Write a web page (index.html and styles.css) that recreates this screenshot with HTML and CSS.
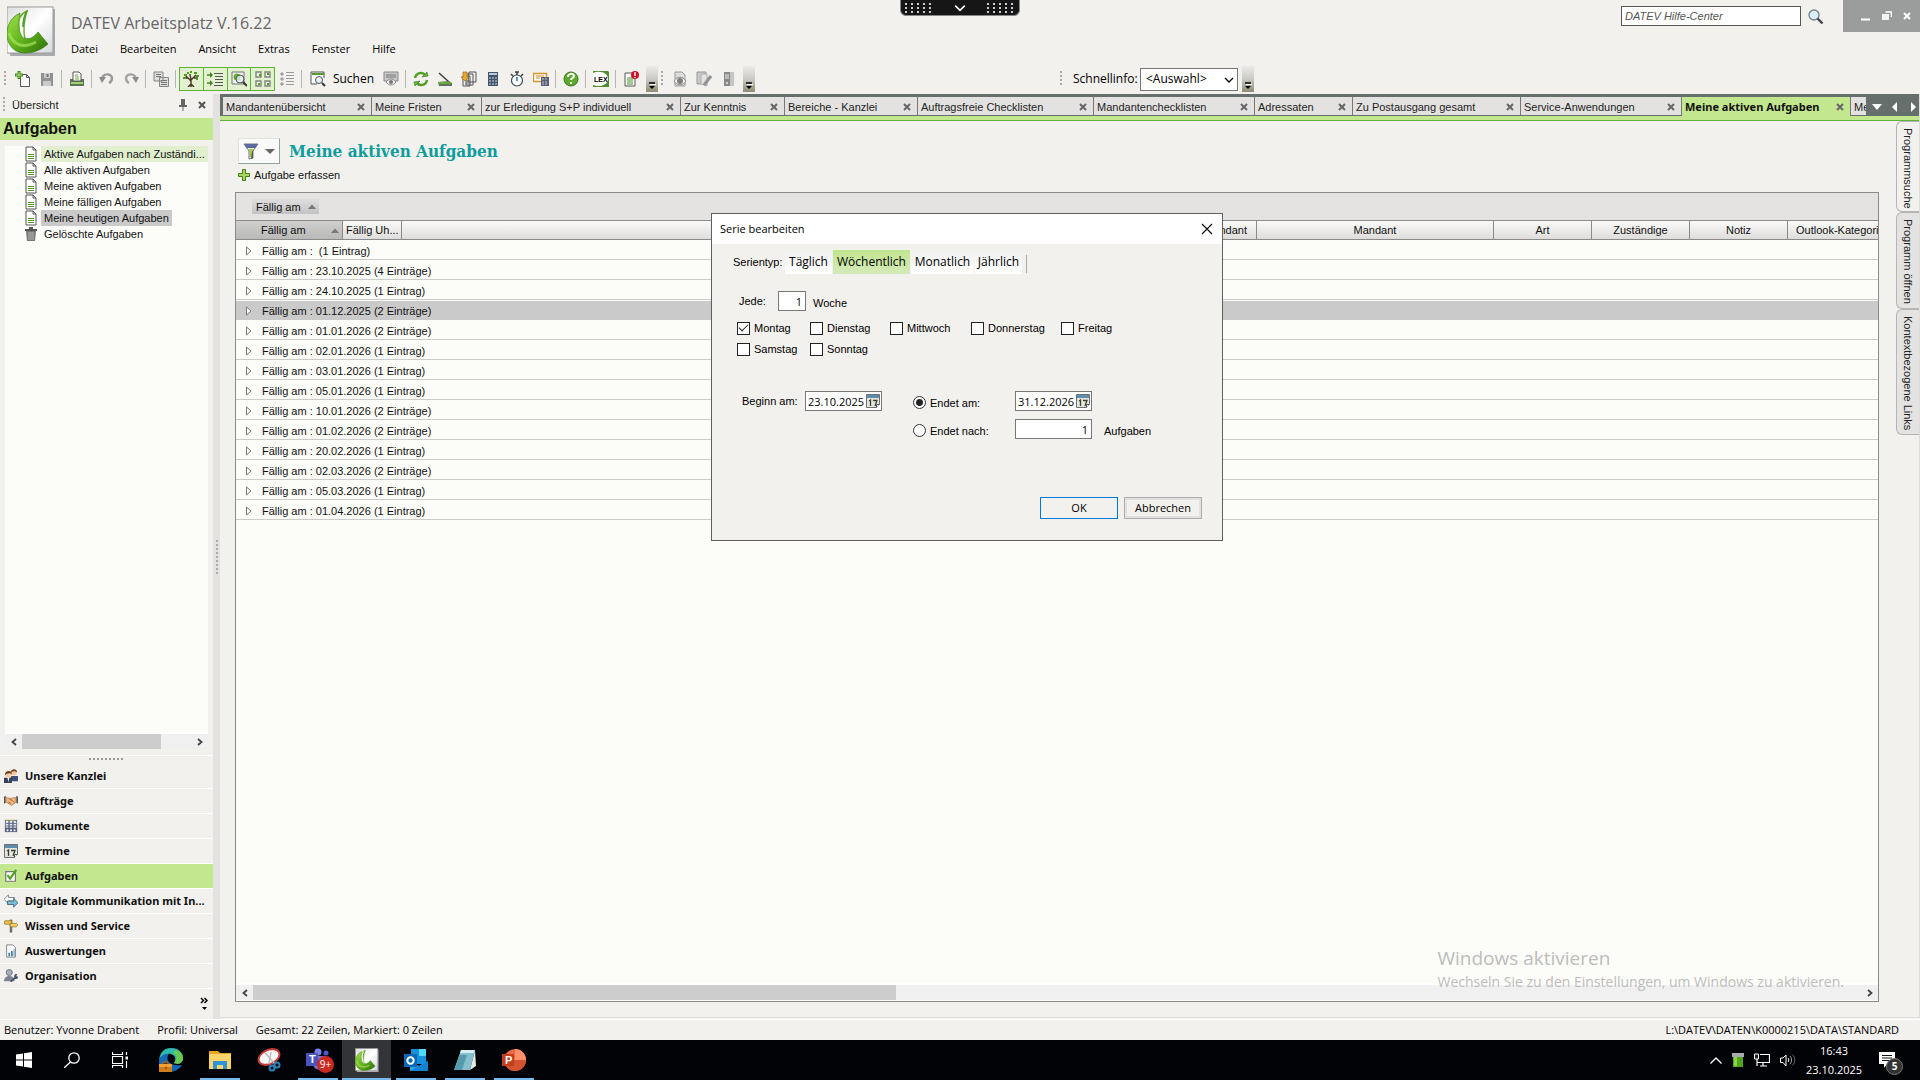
FILE: index.html
```html
<!DOCTYPE html>
<html lang="de">
<head>
<meta charset="utf-8">
<title>DATEV Arbeitsplatz</title>
<link rel="stylesheet" href="styles.css">
</head>
<body>
<svg class="defs" aria-hidden="true">
  <defs>
    <linearGradient id="leaf" x1="0" y1="0" x2="1" y2="1"><stop offset="0" stop-color="#a5e04c"/><stop offset=".5" stop-color="#62b51c"/><stop offset="1" stop-color="#2c6c0c"/></linearGradient>
    <linearGradient id="paper" x1="0" y1="0" x2="1" y2="1"><stop offset="0" stop-color="#dcdedf"/><stop offset=".5" stop-color="#fff"/><stop offset="1" stop-color="#d5d7d9"/></linearGradient>
    <symbol id="logo" viewBox="0 0 48 50">
      <rect x="3" y="3" width="45" height="47" fill="#a9abac"/><rect x="0" y="1" width="46" height="46" fill="url(#paper)" stroke="#999" stroke-width="1"/>
      <path d="M13 7C3 12 0 20 0 28c0 12 8 19 18 19 9 0 16-3 23-9l-10-12c-4 5-8 8-13 6-5-3-6-14-5-25z" fill="url(#leaf)" stroke="#397f13" stroke-width=".7"/>
      <path d="M20 5c-7 3-9 9-8 16 0 6 2 10 6 13-2-10-1-20 2-29z" fill="#f8faf5" stroke="#61a832" stroke-width="1.4"/>
      <path d="M20 5c-3 5-4 10-4 16" fill="none" stroke="#4f9a22" stroke-width="1.6"/>
      <path d="M2 27c4 12 14 16 27 9" fill="none" stroke="#a8e15c" stroke-width="3" opacity=".7"/>
    </symbol>
    <symbol id="doc" viewBox="0 0 12 16"><path d="M1 1h7l3 3v11H1z" fill="#fff" stroke="#555" stroke-width="1"/><path d="M8 1v3h3" fill="none" stroke="#555"/><path d="M3 8.500h6M3 10.500h6M3 12.500h6" stroke="#4c9a1e"/></symbol>
    <symbol id="x" viewBox="0 0 8 8"><path d="M1 1l6 6M7 1L1 7" stroke="currentColor" stroke-width="2"/></symbol>
    <symbol id="cal" viewBox="0 0 14 14"><path d="M.5.5h13v10l-3 3H.5z" fill="#e4e5dc" stroke="#6a7075"/><path d="M1 1h12v3H1z" fill="#5e8cad"/><path d="M3 7l1.500-1v6M7 6.500h4L9 12" fill="none" stroke="#39402f" stroke-width="1.300"/><path d="M10.500 13.500v-3h3" fill="#fff" stroke="#555"/></symbol>
    <symbol id="overflow" viewBox="0 0 12 26"><rect width="12" height="26" fill="url(#ovf)"/><path d="M3 17h6" stroke="#000" stroke-width="1.500"/><path d="M4 18.500h6" stroke="#fff"/><path d="M3 20h6l-3 3z" fill="#000"/></symbol>
    <linearGradient id="ovf" x1="0" y1="0" x2="0" y2="1"><stop offset="0" stop-color="#ecebe9"/><stop offset=".5" stop-color="#cbcac6"/><stop offset="1" stop-color="#8f8c72"/></linearGradient>
    <symbol id="left" viewBox="0 0 8 8"><path d="M6 1L2.500 4 6 7" fill="none" stroke="#444" stroke-width="1.800"/></symbol>
    <symbol id="right" viewBox="0 0 8 8"><path d="M2 1l3.500 3L2 7" fill="none" stroke="#444" stroke-width="1.800"/></symbol>
    <symbol id="down" viewBox="0 0 10 6"><path d="M1 1l4 4 4-4" fill="none" stroke="currentColor" stroke-width="1.300"/></symbol>
    <symbol id="up" viewBox="0 0 8 5"><path d="M0 5l4-4.500L8 5z" fill="#777"/></symbol>
    <symbol id="expand" viewBox="0 0 6 10"><path d="M.5 1v8l4.500-4z" fill="#fff" stroke="#777"/></symbol>
  </defs>
</svg>

<header class="head">
  <svg class="logo"><use href="#logo"/></svg>
  <div class="head-text">
    <h1>DATEV Arbeitsplatz V.16.22</h1>
    <nav class="menu">
      <button>Datei</button><button>Bearbeiten</button><button>Ansicht</button><button>Extras</button><button>Fenster</button><button>Hilfe</button>
    </nav>
  </div>
  <div class="help-search">
    <input type="text" placeholder="DATEV Hilfe-Center" aria-label="DATEV Hilfe-Center">
    <button aria-label="Suche starten"><svg width="16" height="16" viewBox="0 0 16 16"><circle cx="6" cy="6" r="5" fill="#d9eefa" stroke="#77858c" stroke-width="1.400"/><path d="M9.500 9.500l5 5" stroke="#444" stroke-width="2.400"/></svg></button>
  </div>
  <div class="window-buttons">
    <button aria-label="Minimieren"><svg width="10" height="10" viewBox="0 0 10 10"><path d="M0 8.500h9" stroke="#fff" stroke-width="2"/></svg></button>
    <button aria-label="Wiederherstellen"><svg width="10" height="10" viewBox="0 0 10 10"><path d="M3.500 1h6v5" fill="none" stroke="#fff" stroke-width="1.600"/><path d="M0 3h7v6H0z" fill="#f2f2f2"/></svg></button>
    <button aria-label="Schließen"><svg width="8" height="8" color="#fff"><use href="#x"/></svg></button>
  </div>
</header>

<div class="toolbar">
  <i class="grip"></i>
  <button class="tool" aria-label="Neu"><svg viewBox="0 0 16 16"><path d="M5.500 3.500h6l3 3v9h-9z" fill="#fff" stroke="#555"/><path d="M11.500 3.500v3h3" fill="none" stroke="#555"/><path d="M4 0v8M0 4h8" stroke="#3d8c12" stroke-width="3"/><path d="M4 1v6M1 4h6" stroke="#b5e27a"/></svg></button>
  <button class="tool" aria-label="Speichern"><svg viewBox="0 0 16 16"><path d="M2 2h12v13H2z" fill="#8f9192"/><path d="M5 2h6v5H5zM4 10h8v5H4z" fill="#c9cacb"/><path d="M8.500 3v3" stroke="#777" stroke-width="2"/></svg></button>
  <i class="sep"></i>
  <button class="tool" aria-label="Drucken"><svg viewBox="0 0 16 16"><path d="M1 8h14v7H1z" fill="#5c7357"/><path d="M4 1h6l2 2v7H4z" fill="#fff" stroke="#555"/><path d="M6 4h3M6 6h4M6 8h4" stroke="#65a832"/><path d="M2 12h12" stroke="#9fd36a" stroke-width="2"/></svg></button>
  <i class="sep"></i>
  <button class="tool" aria-label="Rückgängig"><svg viewBox="0 0 16 16"><path d="M3 8c1-6 9-6 10-1 0 3-1 4-3 5" fill="none" stroke="#999" stroke-width="2.400"/><path d="M0 6h7l-4 6z" fill="#8c8c8c"/></svg></button>
  <button class="tool" aria-label="Wiederholen"><svg viewBox="0 0 16 16"><path d="M13 8C12 2 4 2 3 7c0 3 1 4 3 5" fill="none" stroke="#a4a4a4" stroke-width="2.400"/><path d="M16 6H9l4 6z" fill="#8c8c8c"/></svg></button>
  <i class="sep"></i>
  <button class="tool" aria-label="Kopieren"><svg viewBox="0 0 16 16"><path d="M1 1h9v9H1zM6.500 6.500h9v9h-9z" fill="#dededc" stroke="#858585"/><path d="M3 3.500h5M3 5.500h5M8 9.500h6M8 11.500h6M8 13.500h6" stroke="#777"/></svg></button>
  <i class="sep"></i>
  <div class="toggles">
    <button aria-label="Navigationsbaum"><svg viewBox="0 0 16 16"><path d="M8 16V8M8 10L3 5M8 9l5-5M8 9L7 3M5 7H1M11 7h4M5 16l3-3 3 3" fill="none" stroke="#4d3c2c" stroke-width="1.500"/><path d="M1 4h3M4 2h2M7 1h2M11 2h3M13 5h3M0 7h2M13 8h2" stroke="#4f9c21" stroke-width="2"/></svg></button>
    <button aria-label="Gliederung"><svg viewBox="0 0 16 16"><path d="M0 4h5M0 12h5" stroke="#3d8d1a" stroke-width="1.600"/><path d="M3 1l3 3-3 3zM3 9l3 3-3 3z" fill="#477f30"/><path d="M7 2.500h9M8 5.500h8M8 8.500h8M8 11.500h8M7 14.500h9" stroke="#555" stroke-width="1.200"/></svg></button>
    <button aria-label="Vorschau"><svg viewBox="0 0 16 16"><path d="M1 1h12v12H1z" fill="#f6f6f6" stroke="#6c7170"/><circle cx="6" cy="6" r="3.500" fill="#63ae2d"/><circle cx="9" cy="8" r="4" fill="#dceaf0" fill-opacity=".8" stroke="#555"/><path d="M12 11l4 4" stroke="#333" stroke-width="2"/></svg></button>
    <button aria-label="Kacheln"><svg viewBox="0 0 16 16"><path d="M1 1h5v5H1zM10 1h5v5h-5zM1 10h5v5H1zM10 10h5v5h-5z" fill="#f0f3e9" stroke="#80877c" stroke-width="1.400"/><path d="M4 3h2v2H4zM12 2h2v2h-2zM3 12h2v2H3zM12 12h2v2h-2z" fill="#4f9d22"/></svg></button>
  </div>
  <button class="tool" aria-label="Liste"><svg viewBox="0 0 16 16"><path d="M2 2h2v2H2zM2 7h2v2H2zM2 12h2v2H2z" fill="#eee" stroke="#8a8a8a"/><path d="M7 1.500h8M7 4.500h8M7 7.500h8M7 10.500h8M7 13.500h8" stroke="#999"/></svg></button>
  <i class="sep"></i>
  <button class="tool search-tool"><svg viewBox="0 0 16 16"><path d="M1 13V1h13v6" fill="#fff" stroke="#555"/><path d="M1 13h6" stroke="#555"/><path d="M2 3h12" stroke="#509b2b" stroke-width="2"/><circle cx="9" cy="9" r="3.500" fill="#e5f1f6" stroke="#555"/><path d="M12 12l3 3" stroke="#333" stroke-width="2"/></svg><span>Suchen</span></button>
  <button class="tool" aria-label="Anzeigen"><svg viewBox="0 0 16 16"><path d="M1 1h14v9H1z" fill="#c8c8c8" stroke="#898989"/><path d="M3 4h10M3 6h10" stroke="#777"/><path d="M3 11c3-4 7-4 10 0-3 4-7 4-10 0z" fill="#eee" stroke="#888"/><circle cx="8" cy="11" r="2" fill="#777"/></svg></button>
  <i class="sep"></i>
  <button class="tool" aria-label="Aktualisieren"><svg viewBox="0 0 16 16"><path d="M2 7c1-6 8-6 10-3M14 9c-1 6-8 6-10 3" fill="none" stroke="#4e9f23" stroke-width="2.400"/><path d="M9 6l6-1-1-4zM7 10l-6 1 1 4z" fill="#65b52f" stroke="#34751a" stroke-width=".6"/></svg></button>
  <button class="tool" aria-label="Scannen"><svg viewBox="0 0 16 16"><path d="M2 2l10 9" stroke="#444" stroke-width="1.600"/><path d="M1 11l11-1 3 2v3H2z" fill="#60715f"/><path d="M2 12h12" stroke="#68ad36" stroke-width="2"/></svg></button>
  <button class="tool" aria-label="Ablegen"><svg viewBox="0 0 16 16"><path d="M8 1h7v10H7zM5 3h7v11H5zM2 5h7v10H2z" fill="#eee" stroke="#555"/><path d="M5 10h4M5 12h4" stroke="#666"/><path d="M2 1h4v5h2L4 10 0 6h2z" fill="#e9a72c" stroke="#9b6e1f" stroke-width=".7"/></svg></button>
  <button class="tool" aria-label="Rechner"><svg viewBox="0 0 16 16"><path d="M3 1h10v14H3z" fill="#46546b"/><path d="M4 3h8" stroke="#b8cae0" stroke-width="2"/><path d="M4 7h8M4 10h8M4 13h8" stroke="#9fadbd" stroke-width="1.500" stroke-dasharray="2 1"/></svg></button>
  <button class="tool" aria-label="Zeiterfassung"><svg viewBox="0 0 16 16"><path d="M6 1h4M8 1v3M2 3l2 2M14 3l-2 2" stroke="#444" stroke-width="1.600"/><circle cx="8" cy="9.500" r="5.500" fill="#fff" stroke="#3b4a55" stroke-width="1.200"/><path d="M8 6v4" stroke="#3979ba" stroke-width="1.600"/></svg></button>
  <button class="tool" aria-label="Abrechnung"><svg viewBox="0 0 16 16"><path d="M.5 2.500h13v8H.5z" fill="#fff" stroke="#d9952a" stroke-width="1.500"/><path d="M3 5h8M3 7h4" stroke="#ca8927"/><path d="M8 6h8v9H8z" fill="#596173"/><path d="M9 8h6M9 11h6M9 13h6" stroke="#bcc5d3" stroke-dasharray="2 1"/></svg></button>
  <i class="sep"></i>
  <button class="tool" aria-label="Hilfe"><svg viewBox="0 0 16 16"><circle cx="8" cy="8" r="7" fill="#5da92d" stroke="#39751c"/><path d="M5 6c0-4 6-4 6-1 0 2-3 2-3 4" fill="none" stroke="#fff" stroke-width="2"/><path d="M7 11h2v2H7z" fill="#fff"/></svg></button>
  <i class="sep"></i>
  <button class="tool" aria-label="LEX"><svg viewBox="0 0 16 16"><path d="M0 0h15l1 1v15H0z" fill="#538d30"/><path d="M0 2c7-3 15 0 15 6 0 5-7 9-15 6z" fill="#fff"/><text x="1" y="11" font-family="Liberation Sans" font-size="7" font-weight="700">LEX</text></svg></button>
  <i class="sep"></i>
  <button class="tool" aria-label="Hinweise"><svg viewBox="0 0 16 16"><path d="M2 2h10v13H2z" fill="#fff" stroke="#555"/><path d="M4 7h6M4 9h6M4 11h6M4 13h6" stroke="#478f24"/><circle cx="12" cy="4" r="4" fill="#cf1020"/><path d="M12 1v4M12 6v1" stroke="#fff" stroke-width="1.400"/></svg></button>
  <button class="overflow" aria-label="Weitere Schaltflächen"><svg><use href="#overflow"/></svg></button>
  <i class="grip"></i>
  <button class="tool" aria-label="Ansehen"><svg viewBox="0 0 16 16"><path d="M3 1h7l3 3v11H3z" fill="#ddd" stroke="#999"/><path d="M2 10c3-5 9-5 12 0-3 5-9 5-12 0z" fill="#eee" stroke="#888"/><circle cx="8" cy="10" r="3" fill="#808080"/></svg></button>
  <button class="tool" aria-label="Bearbeiten"><svg viewBox="0 0 16 16"><path d="M1 1h9v12H1z" fill="#c9c9c9" stroke="#999"/><path d="M5 3h6v12l-6-2z" fill="#e4e4e4" stroke="#aaa"/><path d="M15 5l-7 9" stroke="#939393" stroke-width="3"/></svg></button>
  <button class="tool" aria-label="Ordner"><svg viewBox="0 0 16 16"><path d="M4 1h6v14H4z" fill="#888"/><path d="M10 1h4v14h-4z" fill="#c5c5c5"/><path d="M5 3h4v5H5z" fill="#bbb"/><circle cx="7" cy="12" r="1" fill="#eee"/></svg></button>
  <button class="overflow" aria-label="Weitere Schaltflächen"><svg><use href="#overflow"/></svg></button>
  <div class="quickinfo">
    <i class="grip"></i>
    <label for="quick">Schnellinfo:</label>
    <div class="select"><select id="quick"><option>&lt;Auswahl&gt;</option></select><svg width="10" height="6"><use href="#down"/></svg></div>
    <button class="overflow" aria-label="Weitere Schaltflächen"><svg><use href="#overflow"/></svg></button>
  </div>
</div>

<div class="workspace">
  <aside class="sidebar">
    <div class="side-title"><i class="grip"></i><span>Übersicht</span>
      <button aria-label="Anheften"><svg width="8" height="12" viewBox="0 0 8 12"><path d="M2 0h4v6h2v2H0V6h2zM3.500 8h1v4h-1z" fill="#666"/></svg></button>
      <button aria-label="Schließen"><svg width="8" height="8"><use href="#x"/></svg></button></div>
    <h2>Aufgaben</h2>
    <ul class="tree">
      <li><svg><use href="#doc"/></svg><a href="#" class="hot">Aktive Aufgaben nach Zuständi...</a></li>
      <li><svg><use href="#doc"/></svg><a href="#">Alle aktiven Aufgaben</a></li>
      <li><svg><use href="#doc"/></svg><a href="#">Meine aktiven Aufgaben</a></li>
      <li><svg><use href="#doc"/></svg><a href="#">Meine fälligen Aufgaben</a></li>
      <li><svg><use href="#doc"/></svg><a href="#" class="current">Meine heutigen Aufgaben</a></li>
      <li><svg viewBox="0 0 12 16"><path d="M1 5h10l-1 10H2z" fill="#777"/><path d="M4 6v8M6 6v8M8 6v8" stroke="#bbb"/><path d="M0 4h12M4 2h4" stroke="#555" stroke-width="2"/></svg><a href="#">Gelöschte Aufgaben</a></li>
    </ul>
    <div class="scroll side-scroll"><button aria-label="Nach links"><svg><use href="#left"/></svg></button><div class="track"><div class="thumb"></div></div><button aria-label="Nach rechts"><svg><use href="#right"/></svg></button></div>
    <div class="side-grip"><i></i></div>
    <nav class="modules">
      <a href="#"><svg viewBox="0 0 16 16"><path d="M7 14V8h9v6z" fill="#3e5078"/><circle cx="11" cy="4" r="3.500" fill="#f1c7a1"/><path d="M8 4c0-5 7-5 7 0-2-2-4-2-7 0z" fill="#70401c"/><path d="M0 16v-6h9v6z" fill="#343f5d"/><path d="M4 10h2l-1 5z" fill="#fff"/><circle cx="5" cy="7" r="3.500" fill="#f4cda9"/><path d="M1 7c0-6 8-6 8-1-3-2-5-1-8 1z" fill="#6a3b1e"/></svg>Unsere Kanzlei</a>
      <a href="#"><svg viewBox="0 0 16 16"><path d="M0 3l2-1v8l-2 1zM16 3l-2-1v8l2 1z" fill="#555"/><path d="M2 4l5 1 6-1 1 5-5 4-2-1-5-3z" fill="#efb985" stroke="#a66b40" stroke-width=".8"/><path d="M6 6l3 1 3 3M5 9l3 2" fill="none" stroke="#9e6138"/></svg>Aufträge</a>
      <a href="#"><svg viewBox="0 0 16 16"><path d="M1 1h14v14H1z" fill="#596280"/><path d="M2 2h3v8H2zM6.500 2h3v8h-3zM11 2h3v8h-3z" fill="#e3e9ef"/><path d="M2 5h12M2 8h12" stroke="#57627b"/><path d="M3 13h2M7 13h2M11 13h2" stroke="#fff" stroke-width="2"/><path d="M2 1.500h4" stroke="#9bbf45"/><path d="M7 1.500h4" stroke="#d9b638"/></svg>Dokumente</a>
      <a href="#"><svg viewBox="0 0 14 14"><use href="#cal" width="14" height="14"/></svg>Termine</a>
      <a href="#" class="active"><svg viewBox="0 0 16 16"><path d="M2 3h11v11H2z" fill="#fff" stroke="#777" stroke-width="1.400"/><path d="M4 7l3 4 7-10" fill="none" stroke="#4fa51e" stroke-width="2.500"/></svg>Aufgaben</a>
      <a href="#"><svg viewBox="0 0 16 16"><path d="M5 1v3h7v4H5v3L0 6z" fill="#fff" stroke="#707a81"/><path d="M11 15v-3H4V8h7V5l5 5z" fill="#79bcd4" stroke="#3b667c"/></svg>Digitale Kommunikation mit In...</a>
      <a href="#"><svg viewBox="0 0 16 16"><path d="M7 1h2v14H7z" fill="#777" stroke="#444" stroke-width=".6"/><path d="M1 2h8v4H1L0 4z" fill="#eec34c" stroke="#8d6b20" stroke-width=".8"/><path d="M7 5h7l2 2-2 2H7z" fill="#f3ce61" stroke="#8d6b20" stroke-width=".8"/></svg>Wissen und Service</a>
      <a href="#"><svg viewBox="0 0 16 16"><path d="M3 1h7l3 3v11H3z" fill="#fff" stroke="#777"/><path d="M5 10h2v4H5zM8 8h2v6H8zM11 6h1v8h-1z" fill="#3e82a7"/></svg>Auswertungen</a>
      <a href="#"><svg viewBox="0 0 16 16"><circle cx="6" cy="4" r="3.500" fill="#a5abb7" stroke="#697080"/><path d="M0 14c0-8 12-8 12 0z" fill="#7d8594"/><path d="M7 14l5-5c-1-3 2-4 3-3l-1 2 1 1 1-1c1 3-2 4-3 3l-5 4z" fill="#404c63"/></svg>Organisation</a>
    </nav>
    <button class="more" aria-label="Weitere Module"><svg width="8" height="14" viewBox="0 0 8 14"><path d="M1 1l2.500 2.500L1 6M4.500 1L7 3.500 4.500 6" fill="none" stroke="#000" stroke-width="1.500"/><path d="M2 10h5l-2.500 3z"/></svg></button>
  </aside>
  <div class="splitter"><i></i></div>
  <main class="main">
    <div class="tabs">
      <div class="tab t1"><a href="#">Mandantenübersicht</a><button aria-label="Schließen"><svg><use href="#x"/></svg></button></div>
      <div class="tab t2"><a href="#">Meine Fristen</a><button aria-label="Schließen"><svg><use href="#x"/></svg></button></div>
      <div class="tab t3"><a href="#">zur Erledigung S+P individuell</a><button aria-label="Schließen"><svg><use href="#x"/></svg></button></div>
      <div class="tab t4"><a href="#">Zur Kenntnis</a><button aria-label="Schließen"><svg><use href="#x"/></svg></button></div>
      <div class="tab t5"><a href="#">Bereiche - Kanzlei</a><button aria-label="Schließen"><svg><use href="#x"/></svg></button></div>
      <div class="tab t6"><a href="#">Auftragsfreie Checklisten</a><button aria-label="Schließen"><svg><use href="#x"/></svg></button></div>
      <div class="tab t7"><a href="#">Mandantenchecklisten</a><button aria-label="Schließen"><svg><use href="#x"/></svg></button></div>
      <div class="tab t8"><a href="#">Adressaten</a><button aria-label="Schließen"><svg><use href="#x"/></svg></button></div>
      <div class="tab t9"><a href="#">Zu Postausgang gesamt</a><button aria-label="Schließen"><svg><use href="#x"/></svg></button></div>
      <div class="tab t10"><a href="#">Service-Anwendungen</a><button aria-label="Schließen"><svg><use href="#x"/></svg></button></div>
      <div class="tab t11 active"><a href="#">Meine aktiven Aufgaben</a><button aria-label="Schließen"><svg><use href="#x"/></svg></button></div>
      <div class="tab cut"><a href="#">Me</a></div>
      <div class="tab-nav">
        <button aria-label="Tabliste"><svg width="10" height="10" viewBox="0 0 10 10"><path d="M0 2h10L5 8z" fill="#fff"/></svg></button>
        <button aria-label="Zurück"><svg width="10" height="10" viewBox="0 0 10 10"><path d="M7 0v10L2 5z" fill="#fff"/></svg></button>
        <button aria-label="Vor"><svg width="10" height="10" viewBox="0 0 10 10"><path d="M3 0v10l5-5z" fill="#fff"/></svg></button>
      </div>
    </div>
    <div class="content">
      <section class="page">
        <div class="page-title">
          <button class="filter" aria-label="Filter"><svg width="16" height="18" viewBox="0 0 16 18"><path d="M1 2h14l-5 7v7l-4 1V9z" fill="#e3e8dc" stroke="#777"/><path d="M1 2h14l-3 4H4z" fill="#5a69a0"/><path d="M6 7h4l-1 3v5H7v-5z" fill="#9ccc3c"/><path d="M10 8v8l-2 1 1-7z" fill="#4c5a4e"/></svg><svg width="10" height="6" viewBox="0 0 10 6"><path d="M0 1h10L5 6z" fill="#666"/></svg></button>
          <h2>Meine aktiven Aufgaben</h2>
        </div>
        <button class="add"><svg width="12" height="12" viewBox="0 0 12 12"><path d="M4.500.5h3v4h4v3h-4v4h-3v-4h-4v-3h4z" fill="#a9d860" stroke="#3f7f14"/></svg>Aufgabe erfassen</button>
        <div class="grid">
          <div class="group-bar"><button>Fällig am <svg width="8" height="5"><use href="#up"/></svg></button></div>
          <table>
            <colgroup><col class="c1"><col class="c2"><col><col class="c4"><col class="c5"><col class="c6"><col class="c6"><col class="c6"><col class="c9"></colgroup>
            <thead><tr><th class="sorted"><span>Fällig am</span><svg width="8" height="5"><use href="#up"/></svg></th><th class="tight">Fällig Uh...</th><th></th><th class="end">Mandant</th><th>Mandant</th><th>Art</th><th>Zuständige</th><th>Notiz</th><th class="cutoff">Outlook-Kategorie</th></tr></thead>
            <tbody>
              <tr><td colspan="9"><svg><use href="#expand"/></svg>Fällig am :&nbsp; (1 Eintrag)</td></tr>
              <tr><td colspan="9"><svg><use href="#expand"/></svg>Fällig am : 23.10.2025 (4 Einträge)</td></tr>
              <tr><td colspan="9"><svg><use href="#expand"/></svg>Fällig am : 24.10.2025 (1 Eintrag)</td></tr>
              <tr class="selected"><td colspan="9"><svg><use href="#expand"/></svg>Fällig am : 01.12.2025 (2 Einträge)</td></tr>
              <tr><td colspan="9"><svg><use href="#expand"/></svg>Fällig am : 01.01.2026 (2 Einträge)</td></tr>
              <tr><td colspan="9"><svg><use href="#expand"/></svg>Fällig am : 02.01.2026 (1 Eintrag)</td></tr>
              <tr><td colspan="9"><svg><use href="#expand"/></svg>Fällig am : 03.01.2026 (1 Eintrag)</td></tr>
              <tr><td colspan="9"><svg><use href="#expand"/></svg>Fällig am : 05.01.2026 (1 Eintrag)</td></tr>
              <tr><td colspan="9"><svg><use href="#expand"/></svg>Fällig am : 10.01.2026 (2 Einträge)</td></tr>
              <tr><td colspan="9"><svg><use href="#expand"/></svg>Fällig am : 01.02.2026 (2 Einträge)</td></tr>
              <tr><td colspan="9"><svg><use href="#expand"/></svg>Fällig am : 20.02.2026 (1 Eintrag)</td></tr>
              <tr><td colspan="9"><svg><use href="#expand"/></svg>Fällig am : 02.03.2026 (2 Einträge)</td></tr>
              <tr><td colspan="9"><svg><use href="#expand"/></svg>Fällig am : 05.03.2026 (1 Eintrag)</td></tr>
              <tr><td colspan="9"><svg><use href="#expand"/></svg>Fällig am : 01.04.2026 (1 Eintrag)</td></tr>
            </tbody>
          </table>
          <div class="scroll grid-scroll"><button aria-label="Nach links"><svg><use href="#left"/></svg></button><div class="track"><div class="thumb"></div></div><button aria-label="Nach rechts"><svg><use href="#right"/></svg></button></div>
        </div>
      </section>
      <nav class="side-tabs"><button class="open">Programmsuche</button><button>Programm öffnen</button><button>Kontextbezogene Links</button></nav>
    </div>
  </main>
</div>

<footer class="status"><span>Benutzer: Yvonne Drabent</span><span>Profil: Universal</span><span>Gesamt: 22 Zeilen, Markiert: 0 Zeilen</span><span class="path">L:\DATEV\DATEN\K0000215\DATA\STANDARD</span></footer>

<div class="taskbar">
  <div class="system">
    <button aria-label="Start"><svg width="16" height="16" viewBox="0 0 16 16"><path d="M0 2.500l7-1v6H0zM8 1.300L16 0v7.500H8zM0 8.500h7v6l-7-1zM8 8.500h8V16l-8-1.300z" fill="#fff"/></svg></button>
    <button aria-label="Suche"><svg width="16" height="16" viewBox="0 0 16 16"><circle cx="10" cy="6" r="5.200" fill="none" stroke="#fff" stroke-width="1.300"/><path d="M6.500 10L0 16" stroke="#fff" stroke-width="1.300"/></svg></button>
    <button aria-label="Taskansicht"><svg width="16" height="16" viewBox="0 0 16 16"><path d="M.5 0v2.500h10V0M.5 16v-2.500h10V16M.5 4.500h10v7H.5zM14.500 0v3M14.500 9v7" fill="none" stroke="#fff" stroke-width="1.200"/><path d="M13.500 4.500h2.500v3h-2.500z" fill="#fff"/></svg></button>
  </div>
  <div class="apps">
    <button aria-label="Edge"><svg viewBox="0 0 24 24"><path d="M12 0c8 0 12 5 12 10 0 5-5 7-9 5 4-6-2-10-6-9-5 1-9 5-9 8C0 6 4 0 12 0z" fill="#2fb8b0"/><path d="M17 2c5 2 7 5 7 8 0 5-5 7-9 5 5-5 2-8-1-10z" fill="#68c94d"/><path d="M0 14C0 9 5 5 10 6c-3 3-3 13 13 11-7 11-23 8-23-3z" fill="#1468b5"/><path d="M0 16h13v8H0z" fill="#cf7e1b"/><path d="M0 16h13v3H0z" fill="#f0a334"/><path d="M4 16v-2h5v2M6 19h2v2H6z" fill="#553914" stroke="#b96e17"/></svg></button>
    <button class="running" aria-label="Explorer"><svg viewBox="0 0 24 24"><path d="M1 3h9l2 2h11v16H1z" fill="#e8a51f"/><path d="M1 6h22v15H1z" fill="#fbd568"/><path d="M5 21v-8h14v8h-4v-4H9v4z" fill="#3294d8"/></svg></button>
    <button aria-label="Snipping Tool"><svg viewBox="0 0 24 24"><ellipse cx="12" cy="9" rx="11" ry="7" transform="rotate(-25 12 9)" fill="#f8f8f8" stroke="#c93b39" stroke-width="2"/><path d="M8 5l10 11M14 4l-2 12" stroke="#bbb" stroke-width="1.500"/><circle cx="15" cy="20" r="2.500" fill="none" stroke="#2a85bd" stroke-width="2"/><circle cx="20" cy="17" r="2.500" fill="none" stroke="#2a85bd" stroke-width="2"/></svg></button>
    <button class="running" aria-label="Teams"><svg viewBox="0 0 24 24"><circle cx="12" cy="4" r="3.500" fill="#7b83eb"/><circle cx="20" cy="5" r="2.500" fill="#5059c9"/><path d="M7 8h12v10c-3 6-12 4-12-2z" fill="#7077d9"/><path d="M0 5h12v13H0z" fill="#4b53bc"/><text x="3" y="15" font-family="Liberation Sans" font-size="11" font-weight="700" fill="#fff">T</text></svg><span class="count">9+</span></button>
    <button class="running current" aria-label="DATEV"><svg><use href="#logo"/></svg></button>
    <button class="running" aria-label="Outlook"><svg viewBox="0 0 24 24"><path d="M7 1h15v15H7z" fill="#1490df"/><path d="M15 1h7v7h-7z" fill="#50d9ff"/><path d="M6 13l9 5 9-5v10H6z" fill="#28a8ea"/><path d="M6 23l18-10v10z" fill="#1482d2"/><path d="M0 6h13v13H0z" fill="#0867b8"/><circle cx="6.500" cy="12.500" r="3.200" fill="none" stroke="#fff" stroke-width="2"/></svg></button>
    <button class="running" aria-label="Editor"><svg viewBox="0 0 24 24"><path d="M8 2h14l-5 20H1z" fill="#84bfcd"/><path d="M8 2h14l-1 3H7z" fill="#d7eef3"/><path d="M22 2l1 16-6 4z" fill="#e8e8e6"/><path d="M1 22l6-15h7L9 22z" fill="#559aac"/></svg></button>
    <button class="running" aria-label="PowerPoint"><svg viewBox="0 0 24 24"><circle cx="13" cy="12" r="11" fill="#ed6c47"/><path d="M13 1a11 11 0 0 1 11 11H13z" fill="#ff8f6b"/><path d="M24 12a11 11 0 0 1-20 6l9-6z" fill="#d35230"/><path d="M0 6h12v12H0z" fill="#c43e1c"/><text x="3" y="16" font-family="Liberation Sans" font-size="11" font-weight="700" fill="#fff">P</text></svg></button>
  </div>
  <div class="tray">
    <svg width="12" height="7" viewBox="0 0 12 7"><path d="M.5 6.500L6 1l5.500 5.500" fill="none" stroke="#fff" stroke-width="1.300"/></svg>
    <svg width="12" height="16" viewBox="0 0 12 16"><path d="M1 4h10v11H1z" fill="#51a51a"/><path d="M2 5h3v9H2z" fill="#8ed44b"/><path d="M0 1h12v4H0z" fill="#a7abb0"/></svg>
    <svg width="16" height="14" viewBox="0 0 16 14"><path d="M6 1.500h9.500v8H3M9 10v3M6 13h7M3 6v7" fill="none" stroke="#fff" stroke-width="1.200"/><path d="M.5 1h4v5h-4z" fill="#222" stroke="#fff"/></svg>
    <svg width="16" height="14" viewBox="0 0 16 14"><path d="M.5 5H3l3-3v11L3 9.500H.5z" fill="none" stroke="#fff"/><path d="M8 5c1 1 1 3 0 4" fill="none" stroke="#fff"/><path d="M10 3c2 2 2 6 0 8" fill="none" stroke="#aaa"/><path d="M12.500 1.500c3 3 3 8 0 11" fill="none" stroke="#666"/></svg>
    <time>16:43<br>23.10.2025</time>
    <button class="notify" aria-label="Benachrichtigungen"><svg width="16" height="16" viewBox="0 0 16 16"><path d="M0 0h16v12H8l-3 4v-4H0z" fill="#fff"/><path d="M3 3.500h10M3 6h10M3 8.500h10" stroke="#111"/></svg><span>5</span></button>
  </div>
</div>

<div class="session-bar"><i></i><svg width="12" height="8" color="#fff"><use href="#down"/></svg><i></i></div>

<div class="watermark"><p class="big">Windows aktivieren</p><p>Wechseln Sie zu den Einstellungen, um Windows zu aktivieren.</p></div>

<form class="dialog" role="dialog" aria-labelledby="dialog-title">
  <div class="dialog-head"><h2 id="dialog-title">Serie bearbeiten</h2><button type="button" aria-label="Schließen"><svg width="12" height="12" viewBox="0 0 12 12"><path d="M1 1l10 10M11 1L1 11" stroke="#111" stroke-width="1.200"/></svg></button></div>
  <div class="dialog-body">
    <div class="series"><span>Serientyp:</span><div class="types"><button type="button">Täglich</button><button type="button" class="weekly on">Wöchentlich</button><button type="button" class="monthly">Monatlich</button><button type="button">Jährlich</button></div></div>
    <div class="every"><label for="weeks">Jede:</label><input type="text" id="weeks" value="1"><span>Woche</span></div>
    <div class="days">
      <label><input type="checkbox" checked>Montag</label><label><input type="checkbox">Dienstag</label><label><input type="checkbox">Mittwoch</label><label><input type="checkbox">Donnerstag</label><label><input type="checkbox">Freitag</label><label><input type="checkbox">Samstag</label><label><input type="checkbox">Sonntag</label>
    </div>
    <div class="range">
      <label for="start">Beginn am:</label>
      <div class="date"><input type="text" id="start" value="23.10.2025"><button type="button" aria-label="Kalender"><svg><use href="#cal"/></svg></button></div>
      <label class="radio"><input type="radio" name="end" checked>Endet am:</label>
      <div class="date"><input type="text" aria-label="Enddatum" value="31.12.2026"><button type="button" aria-label="Kalender"><svg><use href="#cal"/></svg></button></div>
      <label class="radio second"><input type="radio" name="end">Endet nach:</label>
      <input type="text" id="count" class="number" value="1"><label for="count" class="unit">Aufgaben</label>
    </div>
    <div class="actions"><button type="button" class="ok">OK</button><button type="button" class="cancel">Abbrechen</button></div>
  </div>
</form>
</body>
</html>
```
FILE: styles.css
```css
:root {
  --bg: #f3f1ee;
  --line: #8a8a8a;
  --green: #c3e78e;
  --white: #fcfcf9;
  --ui: "Open Sans", "Noto Sans", sans-serif;
  --sans: "Liberation Sans", Arial, sans-serif;
}
* { box-sizing: border-box; }
body {
  margin: 0;
  height: 100vh;
  display: flex;
  flex-direction: column;
  overflow: hidden;
  background: var(--bg);
  font: 11px/14px var(--sans);
  color: #111;
  position: relative;
}
button { border: 0; padding: 0; margin: 0; background: none; font: inherit; color: inherit; }
svg { display: block; flex: none; }
a { color: inherit; text-decoration: none; }
h1, h2, p, ul { margin: 0; padding: 0; font-weight: 400; list-style: none; }
input, select { font: inherit; color: inherit; margin: 0; border-radius: 0; }
.defs { position: absolute; width: 0; height: 0; }

/* title and menu */
.head { display: flex; height: 62px; flex: none; }
.logo { width: 48px; height: 50px; margin: 6px 16px 0 7px; }
.head-text { flex: 1; padding-top: 12px; }
.head-text h1 { font: 16px/22px var(--ui); color: #666; }
.menu { display: flex; gap: 22px; margin-top: 6px; font: 11px/18px var(--ui); color: #000; }
.help-search { display: flex; gap: 7px; padding-top: 6px; align-items: flex-start; }
.help-search input { width: 180px; height: 20px; border: 1px solid #555; background: #fff; padding: 0 3px; font-style: italic; }
.help-search input::placeholder { color: #555; }
.help-search button { padding-top: 3px; }
.window-buttons { width: 77px; height: 32px; margin-left: 19px; padding-left: 8px; background: #9b9d9c; display: flex; gap: 11px; align-items: center; justify-content: center; color: #fff; }

/* toolbar */
.toolbar { display: flex; align-items: center; height: 32px; flex: none; padding: 2px 0 0 4px; }
.grip { width: 2px; height: 16px; flex: none; background: repeating-linear-gradient(#aaa 0 2px, transparent 2px 4px); }
.toolbar > .grip { margin-right: 5px; }
.tool { width: 24px; flex: none; display: flex; justify-content: center; align-items: center; }
.tool svg { width: 16px; height: 16px; }
.sep { width: 1px; height: 18px; background: #b5b5b5; margin: 0 3px 0 2px; flex: none; }
.toggles { display: flex; width: 96px; height: 24px; border: 1px solid #5cb531; background: #e3f1d0; }
.toggles button { flex: 1; display: flex; align-items: center; justify-content: center; }
.toggles button + button { border-left: 1px solid #5cb531; }
.toggles svg { width: 16px; height: 16px; }
.search-tool { width: 74px; gap: 7px; font: 12px/16px var(--ui); color: #000; }
.overflow, .overflow svg { width: 12px; height: 26px; flex: none; }
.toolbar > .overflow { margin: 0 3px; }
.quickinfo { display: flex; align-items: center; margin-left: 302px; font: 12px/16px var(--ui); color: #000; }
.quickinfo label { width: 67px; margin-left: 11px; }
.select { position: relative; width: 98px; height: 23px; border: 1px solid #777; background: #fff; margin-right: 4px; }
.select select { appearance: none; width: 100%; height: 21px; padding: 0 20px 0 5px; border: 0; background: transparent; font: 12px/16px var(--ui); }
.select svg { position: absolute; right: 3px; top: 8px; }

/* workspace */
.workspace { flex: 1; min-height: 0; display: flex; }
.sidebar { width: 213px; flex: none; display: flex; flex-direction: column; }
.side-title { display: flex; align-items: center; height: 24px; padding: 0 7px 2px 3px; gap: 11px; color: #555; }
.side-title span { flex: 1; margin-left: -4px; color: #222; }
.sidebar h2 { background: var(--green); font: 700 16px/22px var(--sans); padding-left: 3px; margin-bottom: 6px; }
.tree { flex: 1; margin: 0 5px; background: var(--white); }
.tree li { display: flex; align-items: center; height: 16px; padding-left: 20px; }
.tree svg { width: 12px; height: 16px; margin-right: 4px; }
.tree a { padding: 0 3px; line-height: 16px; white-space: nowrap; }
.tree .hot { background: #e1efcf; }
.tree .current { background: #cacaca; }
.scroll { display: flex; height: 17px; background: #f0f0f0; align-items: stretch; border-top: 2px solid #fff; flex: none; }
.scroll button { width: 17px; display: flex; align-items: center; justify-content: center; }
.scroll svg { width: 8px; height: 8px; }
.track { flex: 1; }
.thumb { height: 100%; background: #cdcdcd; }
.side-scroll { margin: 0 5px; }
.side-scroll .thumb { width: 82%; }
.side-grip { height: 9px; margin-top: 6px; border-top: 1px solid #fff; padding-top: 2px; }
.side-grip i { display: block; width: 35px; height: 2px; margin: 0 auto; background: repeating-linear-gradient(90deg, #999 0 2px, transparent 2px 4px); }
.modules a { display: flex; align-items: center; height: 25px; padding-left: 3px; border-bottom: 1px solid #fff; font: 700 11px/16px "Noto Sans", sans-serif; white-space: nowrap; }
.modules svg { width: 14px; height: 14px; margin: 0 7px 0 1px; }
.modules .active { background: var(--green); }
.more { height: 30px; display: flex; justify-content: flex-end; padding: 8px 5px 0 0; }
.splitter { width: 7px; flex: none; background: #e3e2e0; display: flex; align-items: center; justify-content: center; }
.splitter i { width: 2px; height: 34px; background: repeating-linear-gradient(#aaa 0 2px, transparent 2px 4px); }
.main { flex: 1; min-width: 0; display: flex; flex-direction: column; border-right: 1px solid #ddd; border-bottom: 1px solid #ddd; margin-bottom: 1px; }

/* document tabs */
.tabs { display: flex; flex: none; height: 26px; background: #666f6b; padding: 3px 0 0 3px; border-bottom: 4px solid var(--green); box-shadow: 0 1px #62b138; }
.tab { display: flex; align-items: center; justify-content: space-between; flex: none; height: 18px; background: #e4e2e1; border-right: 1px solid #777; padding: 1px 6px 0 3px; white-space: nowrap; overflow: hidden; color: #222; }
.tab svg { width: 8px; height: 8px; }
.tab button { color: #666; }
.t1 { width: 149px; } .t2 { width: 110px; } .t3 { width: 199px; } .t4 { width: 104px; } .t5 { width: 133px; } .t6 { width: 176px; } .t7 { width: 161px; } .t8 { width: 98px; } .t9 { width: 168px; } .t10 { width: 161px; } .t11 { width: 169px; }
.tab.active { height: 19px; background: var(--green); font: 700 11px/16px "Noto Sans", sans-serif; color: #111; }
.tab.cut { flex: 1; min-width: 0; padding: 1px 0 0 3px; border: 0; }
.tab-nav { display: flex; gap: 8px; padding: 0 1px 0 6px; flex: none; align-items: center; }

/* page */
.content { flex: 1; min-height: 0; display: flex; padding-top: 1px; }
.page { flex: 1; min-width: 0; display: flex; flex-direction: column; padding: 17px 17px 15px 15px; }
.page-title { display: flex; align-items: center; gap: 9px; padding-left: 3px; height: 26px; }
.filter { width: 42px; height: 26px; display: flex; align-items: center; justify-content: center; gap: 6px; background: #fafafa; border: 1px solid #e2e2e2; border-right: 1px solid #8fa5a2; border-bottom: 1px solid #8fa5a2; }
.page-title h2 { font: 700 17px/22px "DejaVu Serif Condensed", "DejaVu Serif", serif; color: #0d9c9c; }
.add { display: flex; align-items: center; gap: 4px; padding-left: 3px; height: 22px; margin-bottom: 6px; align-self: flex-start; }
.grid { flex: 1; min-height: 0; display: flex; flex-direction: column; border: 1px solid var(--line); background: var(--white); overflow: hidden; }
.group-bar { height: 28px; flex: none; background: #e4e3e1; border-bottom: 1px solid var(--line); padding: 6px 16px; }
.group-bar button { display: flex; align-items: center; gap: 7px; height: 15px; padding: 0 3px 0 4px; background: linear-gradient(#dedede, #c4c4c4); }
table { width: 100%; table-layout: fixed; border-collapse: separate; border-spacing: 0; }
th { height: 19px; padding: 0; font-weight: 400; border-right: 1px solid var(--line); border-bottom: 1px solid var(--line); background: linear-gradient(#fafaf9, #deddda); white-space: nowrap; overflow: hidden; }
th:nth-child(3) { border-right: 0; }
th:last-child { border-right: 0; }
.c1 { width: 107px; } .c2 { width: 59px; } .c4 { width: 100px; } .c5 { width: 237px; } .c6 { width: 98px; } .c9 { width: 90px; }
.sorted { background: linear-gradient(#cfcfce, #b9b9b8); text-align: left; padding-left: 25px; }
.sorted span { display: inline-block; width: 70px; }
.sorted svg { display: inline-block; vertical-align: 1px; }
.tight { text-align: left; padding-left: 3px; }
.end { text-align: right; padding-right: 9px; }
.cutoff { text-align: left; padding-left: 8px; text-overflow: clip; }
td { height: 20px; padding: 2px 0 0 10px; border-bottom: 1px solid #ccc; }
td svg { display: inline-block; width: 6px; height: 10px; margin-right: 10px; vertical-align: -1px; }
.selected td { background: linear-gradient(var(--white) 0 1px, #cacaca 1px); border-bottom-color: #cacaca; }
.grid-scroll { margin-top: auto; margin-bottom: 1px; }
.grid-scroll .thumb { width: 40%; }
.side-tabs { width: 23px; flex: none; display: flex; flex-direction: column; }
.side-tabs button { writing-mode: vertical-rl; width: 23px; height: 97px; padding: 6px 0; text-align: left; white-space: nowrap; background: #e4e3e1; border: 1px solid #b5b5b5; border-right: 0; border-radius: 6px 0 0 6px; color: #222; }
.side-tabs .open { background: var(--bg); height: 91px; }
.side-tabs button:last-child { height: 126px; }

/* status line and taskbar */
.status { display: flex; height: 21px; flex: none; padding: 0 21px 0 4px; gap: 18px; font: 11px/20px var(--ui); border-top: 1px solid #fff; color: #000; }
.path { margin-left: auto; }
.taskbar { height: 40px; flex: none; display: flex; background: #020307; color: #fff; }
.system { display: flex; width: 146px; }
.system button { width: 48px; display: flex; align-items: center; justify-content: center; }
.apps { display: flex; }
.apps button { position: relative; width: 49px; display: flex; align-items: center; justify-content: center; }
.apps svg { width: 24px; height: 24px; }
.apps .running { background: linear-gradient(#76b9ed, #76b9ed) center bottom / 40px 2px no-repeat; }
.apps .current { background: linear-gradient(#76b9ed, #76b9ed) center bottom / 100% 2px no-repeat #333438; }
.count { position: absolute; left: 24px; top: 16px; width: 17px; height: 17px; border-radius: 50%; background: #cc2b22; font: 10px/17px var(--ui); text-align: center; }
.tray { margin-left: auto; display: flex; align-items: center; gap: 10px; padding-right: 25px; font: 11px/19px var(--ui); text-align: center; }
.tray time { width: 56px; }
.notify { position: relative; margin-left: 7px; }
.notify span { position: absolute; left: 7px; top: 6px; width: 17px; height: 17px; border-radius: 50%; background: #333; border: 1px solid #777; font: 700 10px/15px var(--ui); }

/* layers above the workspace */
.session-bar { position: absolute; top: 0; left: 50%; width: 120px; height: 16px; margin-left: -60px; display: flex; align-items: center; justify-content: space-between; padding: 0 4px; background: #161616; border: 1px solid #888; border-top: 0; border-radius: 0 0 6px 6px; }
.session-bar i { width: 28px; height: 10px; background: repeating-linear-gradient(90deg, transparent 0 2px, #161616 2px 6px), repeating-linear-gradient(#ccc 0 2px, #161616 2px 4px); }
.watermark { position: absolute; right: 76px; bottom: 87px; color: #bcbcba; font: 14px/22px var(--ui); }
.watermark .big { font-size: 19px; line-height: 26px; }
.dialog { position: absolute; left: 711px; top: 213px; width: 512px; height: 328px; background: var(--bg); border: 1px solid #5f5f5f; display: flex; flex-direction: column; color: #000; }
.dialog-head { display: flex; height: 30px; background: #fff; align-items: center; justify-content: space-between; padding: 0 9px 0 8px; }
.dialog-head h2 { font: 11px/16px var(--ui); }
.dialog-body { flex: 1; display: flex; flex-direction: column; padding: 6px 20px 21px 21px; }
.series { display: flex; align-items: center; height: 24px; }
.series > span { width: 52px; white-space: nowrap; }
.types { display: flex; gap: 1px; font: 12px/22px var(--ui); }
.types button { width: 47px; height: 24px; background: linear-gradient(#f0f0f0, #fff); }
.types .weekly { width: 77px; }
.types .monthly { width: 63px; }
.types .on { background: linear-gradient(#c2e68f, #d5e9ba); }
.types::after { content: ""; width: 1px; height: 18px; margin: 5px 0 0 3px; background: #aaa; }
.every { display: flex; align-items: center; margin: 17px 0 0 6px; gap: 7px; }
.every label { width: 32px; }
.every span { padding-top: 3px; }
.dialog input[type="text"] { height: 20px; border: 1px solid #777; background: #fff; padding: 0 3px; font: 11px/16px var(--ui); }
.every input[type="text"] { width: 28px; text-align: right; }
.days { display: grid; grid-template-columns: 73px 80px 81px 90px 80px; row-gap: 7px; margin: 10px 0 0 4px; }
.days label { display: flex; align-items: center; gap: 4px; }
.days input { appearance: none; width: 13px; height: 13px; border: 1px solid #222; background: #fff; display: grid; place-items: center; }
.days input:checked::before { content: ""; width: 8px; height: 4px; border: solid #222; border-width: 0 0 1px 1px; transform: rotate(-45deg); margin-bottom: 3px; }
.range { display: grid; grid-template-columns: 63px 108px 102px 89px 1fr; row-gap: 8px; align-items: center; margin: 35px 0 0 9px; }
.date { position: relative; width: 77px; }
.date input[type="text"] { width: 77px; padding: 0 16px 0 2px; }
.date button { position: absolute; right: 2px; top: 3px; }
.date svg { width: 14px; height: 14px; }
.radio { grid-column: 3; grid-row: 1; display: flex; align-items: center; gap: 4px; padding-top: 3px; }
.range > label:first-child { grid-area: 1 / 1; }
.range label + .date { grid-area: 1 / 2; }
.range .radio + .date { grid-area: 1 / 4; }
.range .second { grid-row: 2; }
.radio input { appearance: none; width: 13px; height: 13px; border: 1px solid #333; border-radius: 50%; background: #fff; }
.radio input:checked { background: radial-gradient(#222 0 3px, #fff 4px); }
.dialog .number[type="text"] { grid-column: 4; grid-row: 2; width: 77px; text-align: right; }
.unit { grid-column: 5; grid-row: 2; padding-top: 3px; }
.actions { margin-top: auto; display: flex; justify-content: flex-end; gap: 6px; font: 11px/16px var(--ui); }
.actions button { width: 78px; height: 22px; border: 1px solid #0078d7; }
.actions .cancel { border-color: #adadad; box-shadow: inset 0 0 0 2px #e1e1e1; }
```
